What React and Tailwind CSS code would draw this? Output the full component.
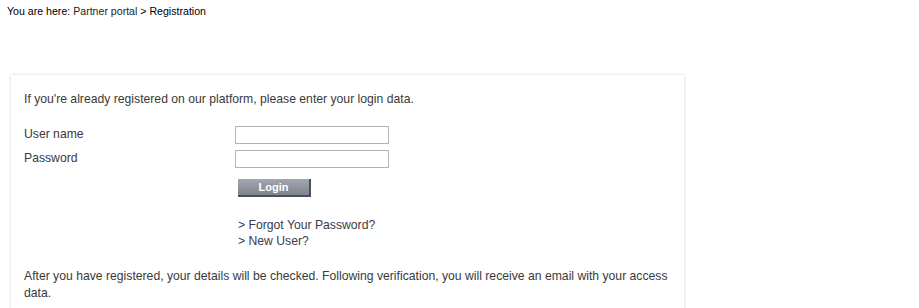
export default function App() {
  return (
    <div className="min-h-[308px] bg-white font-['Liberation_Sans',Arial,sans-serif] text-[#333] overflow-hidden">
      {/* Breadcrumb */}
      <div className="pl-[7px] pt-[5px] text-[10.6px] leading-[13px] text-black">
        You are here: <span className="text-[#222]">Partner portal</span> &gt; Registration
      </div>

      {/* Login box */}
      <div className="ml-[11px] mt-[57px] w-[673px] bg-white shadow-[0_0_3px_rgba(0,0,0,0.18)] pl-[13px] pt-[16px] pb-[20px] text-[12.2px] leading-[17px] text-[#3a3a3a]">
        <p>If you're already registered on our platform, please enter your login data.</p>

        <div className="mt-[18px] flex flex-col gap-[6px]">
          <div className="flex items-center">
            <label className="w-[211px] -mt-[2px]">User name</label>
            <input className="w-[154px] h-[18px] border border-[#b3b3b3] bg-white outline-none" />
          </div>
          <div className="flex items-center">
            <label className="w-[211px] -mt-[2px]">Password</label>
            <input type="password" className="w-[154px] h-[18px] border border-[#b3b3b3] bg-white outline-none" />
          </div>
        </div>

        <div className="pl-[214px] mt-[11px]">
          <button className="w-[73px] h-[18px] bg-gradient-to-b from-[#a2a7b1] to-[#7e838f] border-r-2 border-b-2 border-[#4c4f57] text-white font-bold text-[11px] leading-[14px]">
            Login
          </button>
        </div>

        <div className="pl-[214px] mt-[20px] flex flex-col">
          <a className="leading-[16px] text-[#3a3a4a]">&gt; Forgot Your Password?</a>
          <a className="leading-[16px] text-[#3a3a4a]">&gt; New User?</a>
        </div>

        <p className="mt-[19px] w-[655px]">
          After you have registered, your details will be checked. Following verification, you will receive an email with your access data.
        </p>
      </div>
    </div>
  );
}
